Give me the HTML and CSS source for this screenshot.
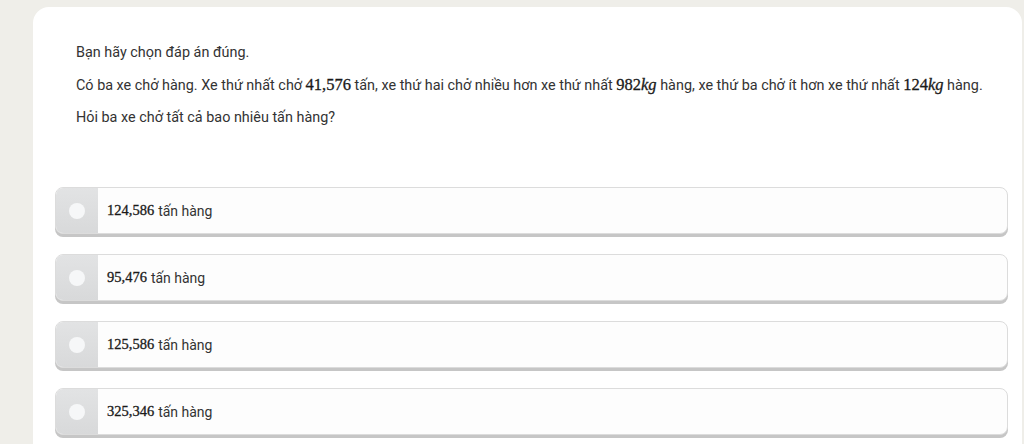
FILE: index.html
```html
<!DOCTYPE html>
<html lang="vi">
<head>
    <meta charset="UTF-8">
    <meta name="viewport" content="width=device-width, initial-scale=1.0">
    <title>Trắc nghiệm</title>
    <link rel="stylesheet" href="styles.css">
</head>
<body>

    <div class="card">
        <!-- Question -->
        <div class="question">
            <p>Bạn hãy chọn đáp án đúng.</p>
            <p>Có ba xe chở hàng. Xe thứ nhất chở <span class="math">41,576</span> tấn, xe thứ hai chở nhiều hơn xe thứ nhất <span class="math">982<i>kg</i></span> hàng, xe thứ ba chở ít hơn xe thứ nhất <span class="math">124<i>kg</i></span> hàng.</p>
            <p>Hỏi ba xe chở tất cả bao nhiêu tấn hàng?</p>
        </div>

        <!-- Answers -->
        <div class="answers">
            <label class="answer">
                <span class="answer-mark"><span class="dot"></span></span>
                <span class="answer-text"><span class="math">124,586</span> tấn hàng</span>
            </label>
            <label class="answer">
                <span class="answer-mark"><span class="dot"></span></span>
                <span class="answer-text"><span class="math">95,476</span> tấn hàng</span>
            </label>
            <label class="answer">
                <span class="answer-mark"><span class="dot"></span></span>
                <span class="answer-text"><span class="math">125,586</span> tấn hàng</span>
            </label>
            <label class="answer">
                <span class="answer-mark"><span class="dot"></span></span>
                <span class="answer-text"><span class="math">325,346</span> tấn hàng</span>
            </label>
        </div>
    </div>

</body>
</html>
```

FILE: styles.css
```css
html, body {
    height: 100%;
}
body {
    margin: 0;
    padding: 7px 2px 0 33px;
    background: #efeee9;
    font-family: Roboto, "Liberation Sans", sans-serif;
    color: #333;
    overflow: hidden;
    box-sizing: border-box;
}
.card {
    background: #fff;
    border-radius: 16px 16px 0 0;
    padding: 36px 14px 0 22px;
    height: 100%;
    box-sizing: border-box;
}
.question {
    padding-left: 21px;
    font-size: 14.4px;
}
.question p {
    margin: 0 0 12px 0;
    line-height: 20px;
}
.math {
    font-family: "Liberation Serif", serif;
    font-size: 16.5px;
    color: #1a1a1a;
    -webkit-text-stroke: 0.3px #1a1a1a;
}
.math i {
    font-style: italic;
}
/* Answers list */
.answers {
    margin-top: 59px;
    display: flex;
    flex-direction: column;
    gap: 20px;
}
.answer {
    display: flex;
    height: 45px;
    border: 1px solid #dcdcdc;
    border-radius: 8px;
    overflow: hidden;
    box-shadow: 0 3px 0 #c6c6c6;
    background: #fdfdfd;
    cursor: pointer;
}
.answer-mark {
    width: 42px;
    background: linear-gradient(#e2e3e4, #d8d9da);
    display: flex;
    align-items: center;
    justify-content: center;
}
.dot {
    width: 16px;
    height: 16px;
    border-radius: 50%;
    background: #f6f7f8;
}
.answer-text {
    display: flex;
    align-items: center;
    gap: 4px;
    padding-left: 9px;
    font-size: 14px;
}
.answer-text .math {
    font-size: 14.5px;
}
```
